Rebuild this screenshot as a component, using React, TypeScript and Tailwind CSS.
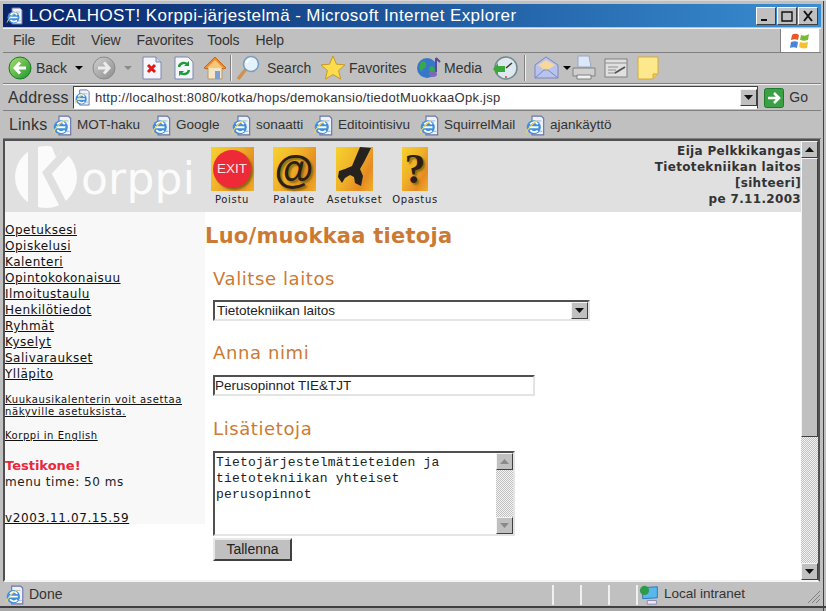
const ui = "font-['Liberation_Sans',Arial,sans-serif]";
const verdana = "font-['DejaVu_Sans',Verdana,sans-serif]";

function PageIcon({ size = 18 }: { size?: number }) {
  return (
    <svg width={size} height={size} viewBox="0 0 18 18" className="shrink-0">
      <path d="M6 1h8l2 2v14H6z" fill="#eef2fb" stroke="#6a76ac" />
      <path d="M10 5h4M12 14h3" stroke="#b5c0de" />
      <circle cx="7.5" cy="10.5" r="6" fill="#3f8fdc" />
      <path d="M3.5 10.5h8M4.5 8c2-2.5 5-2.5 6.5 0M4.5 13c2 2 4.5 2 6.5 .5" stroke="#fff" strokeWidth="1.6" fill="none" />
      <path d="M1 15.5c1-3 6-9 10-11" stroke="#e8d36a" strokeWidth="1" fill="none" />
    </svg>
  );
}

function ArrowButton({ down = false, pale = false }: { down?: boolean; pale?: boolean }) {
  return (
    <div className="flex items-center justify-center shrink-0 w-[17px] h-[17px] bg-[#c0c0c0] border border-t-[#f4f4f4] border-l-[#f4f4f4] border-r-[#404040] border-b-[#404040]">
      <svg width="9" height="5" viewBox="0 0 9 5">
        <path d={down ? "M0 0h9L4.5 5z" : "M0 5h9L4.5 0z"} fill={pale ? "#8a8a8a" : "#111"} />
      </svg>
    </div>
  );
}

function ToolDivider() {
  return <div className="w-[2px] h-[26px] mx-[3px] bg-[#f0f0f0] border-l border-[#808080]" />;
}

function NavRound({ gray = false, flip = false }: { gray?: boolean; flip?: boolean }) {
  const id = gray ? "navGray" : "navGreen";
  return (
    <svg width="24" height="24" viewBox="0 0 24 24" className="shrink-0">
      <defs>
        <linearGradient id={id} x1="0" y1="0" x2="1" y2="1">
          <stop offset="0" stopColor={gray ? "#d0d0d0" : "#a8e070"} />
          <stop offset="1" stopColor={gray ? "#8c8c8c" : "#1f9430"} />
        </linearGradient>
      </defs>
      <circle cx="12" cy="12" r="11" fill={`url(#${id})`} stroke={gray ? "#8a8a8a" : "#1d7a22"} />
      <path
        d={flip ? "M6 12h10M12 6.5l5 5.5-5 5.5" : "M18 12H8M12 6.5 7 12l5 5.5"}
        stroke={gray ? "#ececec" : "#fff"}
        strokeWidth="3"
        fill="none"
      />
    </svg>
  );
}

function Toolbar() {
  return (
    <div className={`h-[31px] shrink-0 flex items-center pl-[5px] border-b border-[#808080] text-[14px] text-[#333] ${ui}`}>
      <NavRound />
      <span className="ml-[4px] w-[36px]">Back</span>
      <span className="ml-[3px] w-0 h-0 border-x-[4px] border-x-transparent border-t-[4px] border-t-black" />
      <span className="w-[9px]" />
      <NavRound gray flip />
      <span className="ml-[8px] w-0 h-0 border-x-[4px] border-x-transparent border-t-[4px] border-t-[#8a8a8a]" />
      <svg width="20" height="24" viewBox="0 0 20 24" className="ml-[10px] shrink-0">
        <path d="M1 1h13l5 5v17H1z" fill="#f4f6fc" stroke="#7c88b0" />
        <path d="M14 1v5h5" fill="#c8d4f0" stroke="#7c88b0" />
        <path d="M6 9l7 7M13 9l-7 7" stroke="#e01818" strokeWidth="3" />
      </svg>
      <svg width="20" height="24" viewBox="0 0 20 24" className="ml-[12px] shrink-0">
        <path d="M1 1h13l5 5v17H1z" fill="#f4f6fc" stroke="#7c88b0" />
        <path d="M5 11a5 5 0 0 1 9-2M15 14a5 5 0 0 1-9 2" stroke="#1f9a3a" strokeWidth="2.4" fill="none" />
        <path d="M15 5v5h-5zM5 20v-5h5z" fill="#1f9a3a" />
      </svg>
      <svg width="24" height="26" viewBox="0 0 24 26" className="ml-[9px] shrink-0">
        <path d="M5 12v12h14V12z" fill="#f4e4c8" stroke="#b89a6e" />
        <path d="M1 13 12 2l11 11-3 1-8-8-8 8z" fill="#ec8a2e" stroke="#c8641a" />
        <path d="M4 13 12 5l8 8" fill="#f7c87a" />
        <rect x="12" y="16" width="5" height="8" fill="#7f9fd8" />
      </svg>
      <ToolDivider />
      <svg width="26" height="26" viewBox="0 0 26 26" className="shrink-0">
        <path d="M3 24 11 14" stroke="#d0914a" strokeWidth="3.5" />
        <circle cx="16" cy="9" r="7.5" fill="#e4f2fc" stroke="#7c9cc0" strokeWidth="1.6" />
        <path d="M12 8a4 4 0 0 1 4-4" stroke="#fff" strokeWidth="2" fill="none" />
      </svg>
      <span className="ml-[6px] w-[48px]">Search</span>
      <svg width="26" height="26" viewBox="0 0 26 26" className="ml-[5px] shrink-0">
        <path d="M13 1l3.5 8.2 8.5.7-6.4 5.7 2 8.4L13 19.6 5.4 24l2-8.4L1 9.9l8.5-.7z" fill="#fbdc4e" stroke="#c89a20" />
      </svg>
      <span className="ml-[3px] w-[61px]">Favorites</span>
      <svg width="26" height="26" viewBox="0 0 26 26" className="ml-[6px] shrink-0">
        <circle cx="11" cy="13" r="10" fill="#3876c8" />
        <path d="M5 7c4-2 6 1 5 4s-4 2-4 6c-3-2-3-7-1-10zM13 12c3-2 6 0 6 3s-3 5-5 3z" fill="#38a84a" />
        <path d="M20 3v14" stroke="#5a4a9c" strokeWidth="2" />
        <path d="M20 3l4 4" stroke="#5a4a9c" strokeWidth="2" />
        <ellipse cx="17" cy="19" rx="4" ry="3" fill="#7a6abc" />
      </svg>
      <span className="ml-[2px] w-[40px]">Media</span>
      <svg width="26" height="26" viewBox="0 0 26 26" className="ml-[8px] shrink-0">
        <circle cx="14" cy="13" r="11" fill="#dfe8ee" stroke="#6e8a8e" strokeWidth="1.5" />
        <path d="M14 13l6-5" stroke="#3a3a3a" strokeWidth="1.5" />
        <path d="M14 21v2" stroke="#d04040" strokeWidth="1.5" />
        <path d="M1 14l5-6v3h7v6H6v3z" fill="#3aa83a" />
      </svg>
      <div className="ml-[3px]">
        <ToolDivider />
      </div>
      <svg width="28" height="26" viewBox="0 0 28 26" className="ml-[4px] shrink-0">
        <path d="M2 10 13 2l12 8v13H2z" fill="#b9c4ee" stroke="#7a86c0" />
        <path d="M5 10l8-5 9 5-9 6z" fill="#f6d99a" />
        <path d="M2 23l9-8 4 0 10 8" stroke="#7a86c0" fill="none" />
      </svg>
      <span className="ml-[2px] w-0 h-0 border-x-[4px] border-x-transparent border-t-[4px] border-t-black" />
      <svg width="24" height="26" viewBox="0 0 24 26" className="ml-px shrink-0">
        <path d="M6 1h11l2 11H6z" fill="#dce8f8" stroke="#9aa8c0" />
        <path d="M1 13h22v8H1z" fill="#d0d0d0" stroke="#808080" />
        <path d="M5 20h14v4H5z" fill="#f0f0f0" stroke="#808080" />
      </svg>
      <svg width="24" height="24" viewBox="0 0 24 24" className="ml-[8px] shrink-0">
        <rect x="1" y="3" width="22" height="18" fill="#e0e0e0" stroke="#808080" />
        <path d="M1 7h22M4 11h10M4 14h8M4 17h8" stroke="#909090" />
        <path d="M11 17l10-6" stroke="#555" strokeWidth="2" />
      </svg>
      <svg width="22" height="24" viewBox="0 0 22 24" className="ml-[9px] shrink-0">
        <path d="M1 1h20v17l-5 5H1z" fill="#fde98c" stroke="#d8a83a" />
        <path d="M16 23v-5h5" fill="#f4c850" stroke="#d8a83a" />
      </svg>
    </div>
  );
}

function LinkItem({ label, w }: { label: string; w: string }) {
  return (
    <div className={`flex items-center gap-[4px] ${w}`}>
      <PageIcon size={21} />
      <span>{label}</span>
    </div>
  );
}

function IconTile({ children, w = "w-[43px]" }: { children: React.ReactNode; w?: string }) {
  return (
    <div className={`${w} h-[44px] flex items-center justify-center bg-[linear-gradient(120deg,#f6d22e_0%,#f0b028_45%,#e58a22_75%,#f0b028_100%)]`}>
      {children}
    </div>
  );
}

function HeaderAction({ label, w, children }: { label: string; w: string; children: React.ReactNode }) {
  return (
    <div className={`flex flex-col items-center shrink-0 ${w}`}>
      {children}
      <span className="mt-[2px] text-[10px] leading-[14px] tracking-[0.65px] text-[#222]">{label}</span>
    </div>
  );
}

const navItems = [
  "Opetuksesi",
  "Opiskelusi",
  "Kalenteri",
  "Opintokokonaisuu",
  "Ilmoitustaulu",
  "Henkilötiedot",
  "Ryhmät",
  "Kyselyt",
  "Salivaraukset",
  "Ylläpito",
];

function Sidebar() {
  return (
    <div className="w-[200px] h-[312px] shrink-0 bg-[#f8f8f8] text-[#111] pt-[10px]">
      {navItems.map((item) => (
        <div key={item} className="h-[16px] text-[12px] leading-[16px] underline tracking-[0.5px]">
          {item}
        </div>
      ))}
      <div className="mt-[12px] text-[10px] leading-[12px] underline tracking-[0.62px]">
        Kuukausikalenterin voit asettaa
        <br />
        näkyville asetuksista.
      </div>
      <div className="mt-[12px] text-[10px] leading-[12px] underline tracking-[0.55px]">Korppi in English</div>
      <div className="mt-[16px] text-[13px] leading-[16px] font-bold text-[#e8283c]">Testikone!</div>
      <div className="text-[12px] leading-[16px] tracking-[0.55px] text-[#222]">menu time: 50 ms</div>
      <div className="mt-[20px] text-[12px] leading-[16px] underline tracking-[0.6px]">v2003.11.07.15.59</div>
    </div>
  );
}

function SectionHeading({ children, mt }: { children: React.ReactNode; mt: string }) {
  return <h2 className={`${mt} ml-[8px] text-[18px] leading-[24px] tracking-[0.6px] text-[#cc7a33]`}>{children}</h2>;
}

const sunken = "border-2 border-t-[#505050] border-l-[#505050] border-r-[#e4e4e4] border-b-[#e4e4e4]";

function MainContent() {
  return (
    <div className="flex-1 min-w-0 pt-[11px]">
      <h1 className={`text-[21px] leading-[26px] font-bold tracking-[0.25px] text-[#cc7a33] ${verdana}`}>Luo/muokkaa tietoja</h1>
      <SectionHeading mt="mt-[18px]">Valitse laitos</SectionHeading>
      <div className={`mt-[9px] ml-[8px] w-[377px] h-[21px] bg-white flex items-center justify-between ${sunken} ${ui} text-[13.5px] text-[#222]`}>
        <span className="pl-[2px] pt-px">Tietotekniikan laitos</span>
        <ArrowButton down />
      </div>
      <SectionHeading mt="mt-[20px]">Anna nimi</SectionHeading>
      <div className={`mt-[10px] ml-[8px] w-[322px] h-[21px] bg-white flex items-center pt-px ${sunken} ${ui} text-[13.5px] text-[#222]`}>
        Perusopinnot TIE&amp;TJT
      </div>
      <SectionHeading mt="mt-[21px]">Lisätietoja</SectionHeading>
      <div className={`mt-[10px] ml-[8px] w-[302px] h-[85px] bg-white flex justify-between ${sunken}`}>
        <div className="pl-px pt-[2px] font-['Liberation_Mono','Courier_New',monospace] text-[13px] leading-[16px] tracking-[0.18px] text-[#222] whitespace-pre">
          {"Tietojärjestelmätieteiden ja\ntietotekniikan yhteiset\nperusopinnot"}
        </div>
        <div className="flex flex-col w-[17px] bg-[repeating-conic-gradient(#c0c0c0_0_25%,#f4f4f4_0_50%)] bg-[length:2px_2px]">
          <ArrowButton pale />
          <div className="flex-1" />
          <ArrowButton down pale />
        </div>
      </div>
      <div className={`mt-[2px] ml-[8px] w-[79px] h-[23px] flex items-center justify-center bg-[#c0c0c0] border-2 border-t-[#e8e8e8] border-l-[#e8e8e8] border-r-[#404040] border-b-[#404040] ${ui} text-[14px] text-[#222]`}>
        Tallenna
      </div>
    </div>
  );
}

function KorppiMark() {
  return (
    <svg width="62" height="64" viewBox="0 0 62 64" className="shrink-0">
      <circle cx="31" cy="32" r="31" fill="#fbfbfb" />
      <path d="M13 0h10v64H13z" fill="#e0e0e0" />
      <path d="M54 4 32 28l17 33" stroke="#e0e0e0" strokeWidth="8" fill="none" />
      <path d="M36 0l5 12 8-9z" fill="#e0e0e0" />
    </svg>
  );
}

function Page() {
  return (
    <div className={`flex-1 min-w-0 bg-white overflow-hidden ${verdana}`}>
      <div className="h-[71px] bg-[#e0e0e0] flex">
        <div className="w-[200px] h-full flex items-center pl-[10px] shrink-0">
          <KorppiMark />
          <span className="ml-[4px] mt-[4px] text-[44px] leading-none tracking-[0.2px] text-[#fbfbfb]">orppi</span>
        </div>
        <div className="flex pt-[6px] shrink-0">
          <HeaderAction label="Poistu" w="w-[54px]">
            <IconTile>
              <div className="w-[38px] h-[38px] rounded-full bg-[#ee2a38] shadow-[2px_2px_2px_#8a6a10] flex items-center justify-center text-[13.5px] text-[#fbe4e4] font-['Liberation_Sans',sans-serif]">
                EXIT
              </div>
            </IconTile>
          </HeaderAction>
          <HeaderAction label="Palaute" w="w-[70px]">
            <IconTile>
              <span className="text-[40px] leading-none font-bold text-[#2a2018] [text-shadow:2px_2px_2px_#8a6a10] font-['Liberation_Sans',sans-serif]">@</span>
            </IconTile>
          </HeaderAction>
          <HeaderAction label="Asetukset" w="w-[51px]">
            <IconTile w="w-[37px]">
              <svg width="37" height="44" viewBox="0 0 37 44">
                <path d="M24 0 35 1 28 15l-4 7 3 7-2 10-6-3-1-6-4-2-5 3-3 5-4-6 1-6 6-2 7-3z" fill="#26221e" />
              </svg>
            </IconTile>
          </HeaderAction>
          <HeaderAction label="Opastus" w="w-[70px]">
            <IconTile w="w-[26px]">
              <span className="text-[42px] leading-none font-bold text-[#2a2018] [text-shadow:2px_2px_2px_#8a6a10] font-['Liberation_Serif',serif]">?</span>
            </IconTile>
          </HeaderAction>
        </div>
        <div className="flex-1 text-right text-[12px] leading-[16px] font-bold tracking-[0.33px] text-[#333] pt-[2px]">
          Eija Pelkkikangas
          <br />
          Tietotekniikan laitos
          <br />
          [sihteeri]
          <br />
          pe 7.11.2003
        </div>
      </div>
      <div className="flex">
        <Sidebar />
        <MainContent />
      </div>
    </div>
  );
}

function StatusPane({ w }: { w: string }) {
  return <div className={`${w} h-[20px] shrink-0 border-l-2 border-[#f0f0f0]`} />;
}

function CaptionButton({ children }: { children: React.ReactNode }) {
  return (
    <div className="w-[20px] h-[18px] ml-px flex items-center justify-center bg-[#c0c0c0] border border-t-white border-l-white border-r-[#404040] border-b-[#404040]">
      <svg width="14" height="12" viewBox="0 0 14 12" fill="none" stroke="#111" strokeWidth="2">
        {children}
      </svg>
    </div>
  );
}

export default function App() {
  return (
    <div className="w-[826px] h-[611px] bg-[#c0c0c0] overflow-hidden flex flex-col pt-[3px] pl-[3px] pr-[5px] border-t border-[#d8d8d8] relative">
      <div className={`h-[23px] shrink-0 flex items-center pl-[3px] pr-[3px] bg-gradient-to-r from-[#0a246a] to-[#3a8ed2] text-white text-[17px] tracking-[0.4px] ${ui}`}>
        <PageIcon size={18} />
        <span className="ml-[5px] flex-1">LOCALHOST! Korppi-järjestelmä - Microsoft Internet Explorer</span>
        <CaptionButton>
          <path d="M2 10h6" />
        </CaptionButton>
        <CaptionButton>
          <path d="M2 2h10v9H2z" strokeWidth="1.4" />
        </CaptionButton>
        <CaptionButton>
          <path d="M3 1l8 10M11 1 3 11" />
        </CaptionButton>
      </div>

      <div className={`h-[25px] mt-px shrink-0 flex items-center border-y border-t-[#f0f0f0] border-b-[#808080] text-[14px] tracking-[-0.1px] text-[#333] ${ui}`}>
        <div className="flex-1 flex pl-[10px] gap-[16px]">
          <span>File</span>
          <span>Edit</span>
          <span>View</span>
          <span>Favorites</span>
          <span className="-ml-[2px]">Tools</span>
          <span>Help</span>
        </div>
        <div className="w-[39px] h-full bg-white flex items-center justify-center shrink-0 mr-[2px] border-l border-[#808080]">
          <svg width="20" height="18" viewBox="0 0 20 18">
            <path d="M2 3c3-2 5-1 7 0l-1 5C6 7 4 7 1 8z" fill="#e8562a" />
            <path d="M11 3c3 1 5 1 8-1l-1 6c-3 1-5 1-8 0z" fill="#78b83a" />
            <path d="M1 10c3-1 5-1 7 0l-1 6c-2-1-5-1-7 0z" fill="#4a84d8" />
            <path d="M10 10c3 1 5 1 8 0l-1 6c-3 1-6 0-8-1z" fill="#f4c22e" />
          </svg>
        </div>
      </div>

      <Toolbar />

      <div className={`h-[27px] shrink-0 flex items-center pl-[5px] pr-[13px] border-t border-b border-t-[#f0f0f0] border-b-[#808080] text-[#333] ${ui}`}>
        <span className="text-[16px] tracking-[0.3px] w-[65px]">Address</span>
        <div className="flex-1 h-[23px] bg-white flex items-center border border-t-[#404040] border-l-[#404040] border-r-[#404040] border-b-white text-[13px]">
          <PageIcon size={17} />
          <span className="ml-[4px] flex-1 tracking-[0.26px]">http://localhost:8080/kotka/hops/demokansio/tiedotMuokkaaOpk.jsp</span>
          <ArrowButton down />
        </div>
        <svg width="20" height="20" viewBox="0 0 20 20" className="ml-[6px] shrink-0">
          <rect x=".5" y=".5" width="19" height="19" rx="2" fill="#3aa044" stroke="#1f7a2c" />
          <path d="M4 10h10M10 5l5 5-5 5" stroke="#fff" strokeWidth="2.6" fill="none" />
        </svg>
        <span className="ml-[5px] text-[14px]">Go</span>
      </div>

      <div className={`h-[28px] shrink-0 flex items-center pl-[6px] pt-px border-b border-[#808080] text-[13.5px] text-[#333] ${ui}`}>
        <span className="text-[16px] tracking-[0.2px] w-[43px]">Links</span>
        <LinkItem label="MOT-haku" w="w-[99px]" />
        <LinkItem label="Google" w="w-[80px]" />
        <LinkItem label="sonaatti" w="w-[82px]" />
        <LinkItem label="Editointisivu" w="w-[106px]" />
        <LinkItem label="SquirrelMail" w="w-[106px]" />
        <LinkItem label="ajankäyttö" w="w-auto" />
      </div>

      <div className="flex-1 min-h-0 mr-px flex border-2 border-t-[#505050] border-l-[#505050] border-r-[#505050] border-b-[#f4f4f4]">
        <Page />
        <div className="w-[17px] shrink-0 flex flex-col bg-[#c0c0c0]">
          <ArrowButton />
          <div className="h-[279px] bg-[#c0c0c0] border border-t-[#f4f4f4] border-l-[#f4f4f4] border-r-[#404040] border-b-[#404040]" />
          <div className="flex-1 bg-[repeating-conic-gradient(#c0c0c0_0_25%,#f4f4f4_0_50%)] bg-[length:2px_2px]" />
          <ArrowButton down />
        </div>
      </div>

      <div className={`h-[24px] shrink-0 flex items-center pl-[2px] pt-px text-[14px] text-[#333] ${ui}`}>
        <PageIcon size={20} />
        <span className="ml-[4px] w-[523px]">Done</span>
        <StatusPane w="w-[28px]" />
        <StatusPane w="w-[28px]" />
        <StatusPane w="w-[28px]" />
        <StatusPane w="w-[3px]" />
        <svg width="22" height="22" viewBox="0 0 24 22" className="shrink-0">
          <path d="M4 3l16-1v12l-16 1z" fill="#58b8ee" stroke="#2a72b8" />
          <circle cx="6" cy="6" r="5" fill="#2f9a4a" />
          <path d="M9 17h10v4H9z" fill="#e8e8f4" stroke="#8a8ab0" />
        </svg>
        <span className="ml-[3px] flex-1 text-[13.5px]">Local intranet</span>
        <svg width="14" height="14" viewBox="0 0 14 14" className="self-end mb-[2px] shrink-0" stroke="#808080">
          <path d="M13 1 1 13M13 5l-8 8M13 9l-4 4" />
        </svg>
      </div>
      <div className="h-[5px] -ml-[3px] -mr-[5px] bg-[#a8a8a8] border-t-2 border-[#404040] shrink-0" />
      <div className="absolute top-0 right-[2px] bottom-0 w-[1px] bg-[#404040]" />
    </div>
  );
}
